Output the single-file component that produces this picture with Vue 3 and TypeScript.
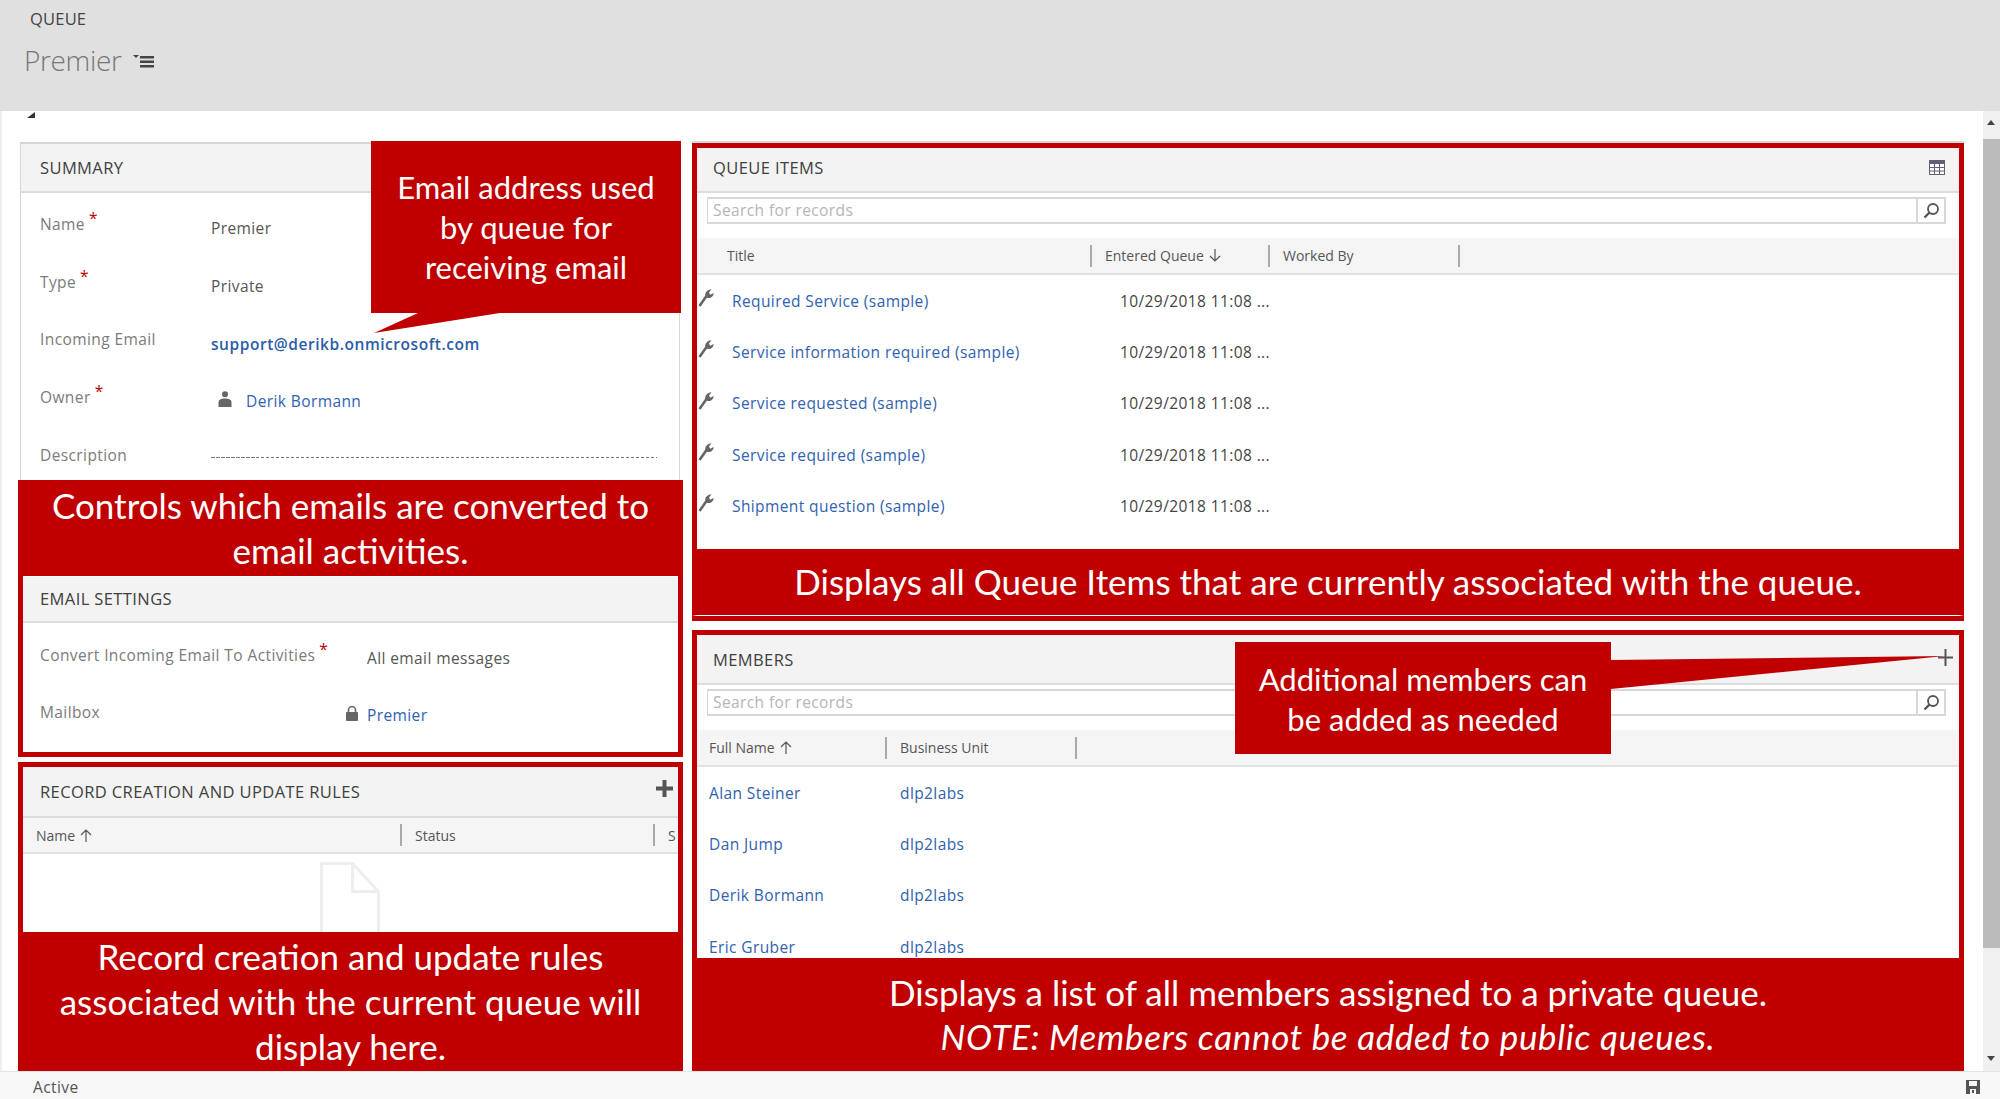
<template>
  <div class="app">
    <header class="top-bar">
      <div class="entity">QUEUE</div>
      <div class="record-name">
        <span>Premier</span>
        <svg class="menu-icon" width="21" height="13" viewBox="0 0 21 13">
          <path d="M0 0h6l-3 3z" fill="#444" />
          <path d="M7 1h14v2.500H7zM7 5.500h14V8H7zM7 10h14v2.500H7z" fill="#444" />
        </svg>
      </div>
    </header>

    <div class="middle">
      <main class="content">
        <svg class="collapse" width="9" height="6" viewBox="0 0 9 6"><path d="M9 0v6H1z" fill="#333" /></svg>
        <div class="left-col">
          <section class="summary">
            <div class="sec-head">SUMMARY</div>
            <div class="form">
              <div class="form-row">
                <span class="label">Name<i class="req">*</i></span><span class="value">Premier</span>
              </div>
              <div class="form-row">
                <span class="label">Type<i class="req">*</i></span><span class="value">Private</span>
              </div>
              <div class="form-row">
                <span class="label">Incoming Email</span><a class="value email">support@derikb.onmicrosoft.com</a>
              </div>
              <div class="form-row">
                <span class="label">Owner<i class="req">*</i></span>
                <span class="value owner">
                  <svg width="14" height="16" viewBox="0 0 14 16">
                    <circle cx="7" cy="3.2" r="3" fill="#666" />
                    <path d="M0.500 16v-4.500C0.500 8.500 3 7.500 7 7.500s6.500 1 6.500 4V16z" fill="#666" />
                  </svg>
                  <a class="link">Derik Bormann</a>
                </span>
              </div>
              <div class="form-row">
                <span class="label">Description</span><span class="dashes"></span>
              </div>
            </div>
            <div class="callout callout-email">
              Email address used<br />by queue for<br />receiving email
              <svg class="tail" width="130" height="21" viewBox="0 0 130 21"><path d="M47 0L3 20L129 0z" fill="#c00000" /></svg>
            </div>
          </section>

          <section class="frame email-frame">
            <div class="caption caption-top">Controls which emails are converted to<br />email activities.</div>
            <div class="sec-head sec-head-sm">EMAIL SETTINGS</div>
            <div class="email-form">
              <div class="email-row">
                <span class="label">Convert Incoming Email To Activities<i class="req">*</i></span>
                <span class="value">All email messages</span>
              </div>
              <div class="email-row">
                <span class="label">Mailbox</span>
                <span class="value mailbox">
                  <svg width="12" height="15" viewBox="0 0 12 15">
                    <path d="M2.500 6V4a3.500 3.500 0 0 1 7 0v2" fill="none" stroke="#666" stroke-width="1.6" />
                    <rect y="6" width="12" height="9" rx="1" fill="#666" />
                  </svg>
                  <a class="link">Premier</a>
                </span>
              </div>
            </div>
          </section>

          <section class="frame rules-frame">
            <div class="sec-head rules-head">
              RECORD CREATION AND UPDATE RULES
              <svg class="plus" width="17" height="17" viewBox="0 0 17 17"><path d="M6.500 0h4v6.500H17v4h-6.500V17h-4v-6.500H0v-4h6.500z" fill="#555" /></svg>
            </div>
            <div class="grid-head rules-cols">
              <span class="col-title first">Name
                <svg class="sort" width="12" height="13" viewBox="0 0 12 13"><path d="M6 13V1M1 6l5-5 5 5" fill="none" stroke="#555" stroke-width="1.2" /></svg>
              </span>
              <span class="col-title sep">Status</span>
              <span class="col-title sep">S</span>
            </div>
            <div class="rules-body">
              <svg width="60" height="80" viewBox="0 0 60 80">
                <path d="M1.500 78V1.500h31l26 28V78M32.500 1.500v28h26" fill="none" stroke="#eee" stroke-width="3" />
              </svg>
            </div>
            <div class="caption caption-rules">Record creation and update rules<br />associated with the current queue will<br />display here.</div>
          </section>
        </div>

        <div class="right-col">
          <section class="frame queue-frame">
            <div class="sec-head wide-head queue-head">
              QUEUE ITEMS
              <svg class="grid-icon" width="16" height="15" viewBox="0 0 16 15">
                <rect x="0.500" y="0.500" width="15" height="14" fill="#fff" stroke="#5f6078" />
                <rect x="0" y="0" width="16" height="4" fill="#5f6078" />
                <path d="M0 7.500h16M0 11h16M5.500 4v11M10.500 4v11" stroke="#5f6078" />
              </svg>
            </div>
            <div class="search">
              <span class="placeholder">Search for records</span>
              <span class="search-btn">
                <svg width="17" height="17" viewBox="0 0 17 17"><circle cx="10" cy="7" r="5" fill="none" stroke="#555" stroke-width="1.8" /><path d="M6.500 10.500L1.500 15.500" stroke="#555" stroke-width="2.4" /></svg>
              </span>
            </div>
            <div class="grid-head queue-cols">
              <span class="col-title title-col">Title</span>
              <span class="col-title sep">Entered Queue
                <svg class="sort" width="12" height="13" viewBox="0 0 12 13"><path d="M6 0v12M1 7l5 5 5-5" fill="none" stroke="#555" stroke-width="1.2" /></svg>
              </span>
              <span class="col-title sep">Worked By</span>
              <span class="col-title sep"></span>
            </div>
            <div class="rows">
              <div v-for="item in queueItems" :key="item" class="queue-row">
                <svg class="wrench" width="16" height="18" viewBox="0 0 16 18">
                  <path d="M1.500 17L8.500 7" stroke="#666" stroke-width="2.6" fill="none" />
                  <path d="M7.400 7.600C6.400 4 9 .6 13.500.3L11 3.500l1.200 2.200 3.400-1.800c.2 3.200-3 5.900-6.400 4.900z" fill="#666" />
                </svg>
                <a class="link">{{ item }}</a>
                <span class="date">10/29/2018 11:08 ...</span>
              </div>
            </div>
            <div class="caption caption-queue">Displays all Queue Items that are currently associated with the queue.</div>
          </section>

          <section class="frame members-frame">
            <div class="sec-head wide-head">
              MEMBERS
              <svg class="plus-thin" width="15" height="17" viewBox="0 0 15 17"><path d="M6.500 0h2v7.500H15v2H8.500V17h-2V9.500H0v-2h6.500z" fill="#555" /></svg>
            </div>
            <div class="search">
              <span class="placeholder">Search for records</span>
              <span class="search-btn">
                <svg width="17" height="17" viewBox="0 0 17 17"><circle cx="10" cy="7" r="5" fill="none" stroke="#555" stroke-width="1.8" /><path d="M6.500 10.500L1.500 15.500" stroke="#555" stroke-width="2.4" /></svg>
              </span>
            </div>
            <div class="grid-head members-cols">
              <span class="col-title">Full Name
                <svg class="sort" width="12" height="13" viewBox="0 0 12 13"><path d="M6 13V1M1 6l5-5 5 5" fill="none" stroke="#555" stroke-width="1.2" /></svg>
              </span>
              <span class="col-title sep">Business Unit</span>
              <span class="col-title sep"></span>
            </div>
            <div class="rows">
              <div v-for="member in members" :key="member" class="member-row">
                <a class="link">{{ member }}</a>
                <a class="link">dlp2labs</a>
              </div>
            </div>
            <div class="caption caption-members">
              Displays a list of all members assigned to a private queue.<br />
              <em>NOTE: Members cannot be added to public queues.</em>
            </div>
            <div class="callout callout-members">
              Additional members can<br />be added as needed
              <svg class="tail-side" width="334" height="48" viewBox="0 0 334 48"><path d="M0 18L334 14L0 47z" fill="#c00000" /></svg>
            </div>
          </section>
        </div>
      </main>

      <aside class="scrollbar">
        <span class="arrow up"></span>
        <span class="thumb"></span>
        <span class="arrow down"></span>
      </aside>
    </div>

    <footer class="status-bar">
      <span>Active</span>
      <svg width="14" height="14" viewBox="0 0 14 14">
        <path d="M0 0h14v14H0z" fill="#555" />
        <path d="M3 1h8v5H3zM4 9h6v5H4z" fill="#f8f8f8" />
        <path d="M6 10h2v3H6z" fill="#555" />
      </svg>
    </footer>
  </div>
</template>

<script setup lang="ts">
const queueItems: string[] = [
  "Required Service (sample)",
  "Service information required (sample)",
  "Service requested (sample)",
  "Service required (sample)",
  "Shipment question (sample)",
];

const members: string[] = ["Alan Steiner", "Dan Jump", "Derik Bormann", "Eric Gruber"];
</script>

<style scoped>
.app {
  height: 1099px;
  display: flex;
  flex-direction: column;
  overflow: hidden;
  background: #fff;
  font-family: "Open Sans", "Liberation Sans", sans-serif;
  font-size: 15.5px;
  letter-spacing: 0.4px;
  color: #444;
}

.top-bar {
  height: 111px;
  flex: none;
  box-sizing: border-box;
  padding: 9px 0 0 24px;
  background: #e0e0e0;
}

.entity {
  margin-left: 6px;
  font-size: 16.5px;
  letter-spacing: 0.2px;
  line-height: 20px;
  color: #444;
}

.record-name {
  display: flex;
  align-items: center;
  gap: 11px;
  margin-top: 12px;
  font-size: 28px;
  letter-spacing: -0.35px;
  line-height: 38px;
  font-weight: 300;
  color: #777;
}

.menu-icon {
  margin-top: 3px;
}

.middle {
  flex: 1;
  display: flex;
  min-height: 0;
}

.content {
  position: relative;
  flex: 1;
  display: flex;
  gap: 9px;
  box-sizing: border-box;
  padding: 30px 19px 0 16px;
  border-left: 2px solid #eee;
  overflow: hidden;
}

.collapse {
  position: absolute;
  left: 24px;
  top: 1px;
}

.left-col {
  width: 665px;
  flex: none;
  padding-top: 1px;
}

.right-col {
  flex: 1;
  min-width: 0;
  border-top: 2px solid #d8d8d8;
}

.summary {
  position: relative;
  box-sizing: border-box;
  height: 338px;
  margin: 0 3px 0 2px;
  border: 1px solid #d6d6d6;
  border-top-width: 2px;
  border-bottom: 0;
}

.sec-head {
  display: flex;
  align-items: center;
  justify-content: space-between;
  box-sizing: border-box;
  height: 49px;
  padding: 0 17px 0 19px;
  flex: none;
  background: #f3f3f3;
  border-bottom: 2px solid #ddd;
  font-size: 16.5px;
  letter-spacing: 0.4px;
  font-weight: 500;
  color: #404040;
}

.form {
  padding-top: 5px;
}

.form-row {
  display: flex;
  align-items: center;
  height: 57.8px;
  padding-left: 19px;
}

.label {
  width: 171px;
  flex: none;
  padding-bottom: 6px;
  color: #7b7b7b;
}

.req {
  position: relative;
  top: -6px;
  margin-left: 4px;
  font-style: normal;
  color: #c00000;
}

.value {
  color: #555;
  padding-top: 3px;
}

.email {
  font-weight: 600;
  letter-spacing: 0.55px;
  color: #2a5caa;
}

.owner,
.mailbox {
  display: flex;
  align-items: center;
}

.owner {
  padding-top: 1px;
}

.owner svg {
  margin: -3px 14px 0 7px;
}

.link {
  color: #2f62b0;
}

.dashes {
  width: 446px;
  height: 1px;
  margin-bottom: 2px;
  background: repeating-linear-gradient(90deg, #777 0 3.5px, transparent 3.5px 5px);
}

.callout {
  position: absolute;
  box-sizing: border-box;
  background: #c00000;
  color: #fff;
  text-align: center;
  font-family: Lato, "Liberation Sans", sans-serif;
  letter-spacing: 0;
  font-size: 31px;
  line-height: 40px;
}

.callout-email {
  top: -3px;
  right: -2px;
  width: 310px;
  height: 172px;
  padding-top: 26px;
}

.tail {
  position: absolute;
  left: 0;
  top: 100%;
}

.callout-members {
  left: 538px;
  top: 7px;
  width: 376px;
  height: 112px;
  padding-top: 17px;
}

.tail-side {
  position: absolute;
  left: 100%;
  top: 0;
}

.frame {
  position: relative;
  display: flex;
  flex-direction: column;
  box-sizing: border-box;
  border: 5px solid #c00000;
  overflow: visible;
}

.email-frame {
  height: 277px;
  margin-top: 0;
}

.caption {
  flex: none;
  box-sizing: border-box;
  background: #c00000;
  color: #fff;
  text-align: center;
  font-family: Lato, "Liberation Sans", sans-serif;
  letter-spacing: 0;
  font-size: 35px;
  line-height: 45px;
}

.caption-top {
  height: 93px;
  margin: -2px -5px 1px;
}

.sec-head-sm {
  height: 46px;
  padding: 0 17px 2px;
}

.email-form {
  padding-top: 6px;
}

.email-row {
  display: flex;
  align-items: center;
  height: 57px;
  padding-left: 17px;
}

.email-row .label {
  width: 320px;
  padding-bottom: 6px;
}

.email-row .value {
  padding-top: 1px;
}

.email-row:first-child .value {
  margin-left: 7px;
}

.mailbox {
  margin-left: -14px;
}

.mailbox svg {
  margin: -3px 9px 0 0;
}

.rules-frame {
  height: 315px;
  margin-top: 5px;
}

.rules-head {
  height: 51px;
  padding: 0 5px 0 17px;
}

.plus {
  margin-top: -6px;
}

.grid-head {
  display: grid;
  align-items: center;
  flex: none;
  box-sizing: border-box;
  background: #f5f5f5;
  border-bottom: 2px solid #e2e2e2;
}

.rules-cols {
  height: 36px;
  grid-template-columns: 376px 253px 1fr;
  padding-left: 1px;
  overflow: hidden;
}

.col-title {
  display: flex;
  align-items: center;
  gap: 5px;
  height: 22px;
  font-size: 14px;
  letter-spacing: 0;
  color: #555;
  box-sizing: border-box;
}

.first {
  padding-left: 12px;
}

.sep {
  border-left: 2px solid #aaa;
  padding-left: 13px;
}

.rules-body {
  flex: 1;
  min-height: 0;
  padding: 8px 0 0 297px;
  overflow: hidden;
}

.rules-body svg {
  display: block;
}

.caption-rules {
  height: 140px;
  margin: 0 -5px;
  padding-top: 2px;
}

.queue-frame {
  height: 478px;
}

.wide-head {
  height: 45px;
  padding: 0 14px 0 16px;
}

.queue-head {
  padding-bottom: 4px;
}

.search {
  display: flex;
  flex: none;
  justify-content: space-between;
  box-sizing: border-box;
  height: 27px;
  margin: 4px 13px 14px 10px;
  border: 2px solid #d8d8d8;
  border-width: 2px 2px 2px 1px;
}

.placeholder {
  padding-left: 5px;
  line-height: 23px;
  color: #b5b5b5;
}

.search-btn {
  display: flex;
  align-items: center;
  justify-content: center;
  width: 26px;
  border-left: 2px solid #d8d8d8;
}

.queue-cols {
  height: 37px;
  grid-template-columns: 393px 178px 190px 1fr;
}

.title-col {
  padding-left: 30px;
}

.rows {
  flex: 1;
  min-height: 0;
  overflow: hidden;
}

.queue-row {
  position: relative;
  display: grid;
  grid-template-columns: 388px 1fr;
  align-items: center;
  height: 51.3px;
  padding-left: 35px;
}

.wrench {
  position: absolute;
  left: 1px;
  top: 14px;
}

.date {
  color: #444;
}

.caption-queue {
  height: 67px;
  margin: 0 -5px;
  padding-top: 10px;
  border-bottom: 1px solid #fff;
  border-left: 5px solid #c00000;
  border-right: 5px solid #c00000;
}

.members-frame {
  height: 446px;
  margin-top: 9px;
}

.members-frame .wide-head {
  height: 50px;
  padding-right: 27px;
}

.plus-thin {
  position: absolute;
  z-index: 2;
  left: 1241px;
  top: 14px;
}

.members-cols {
  height: 37px;
  grid-template-columns: 176px 190px 1fr;
  padding-left: 12px;
}

.members-frame .search {
  margin-bottom: 14px;
}

.member-row {
  display: grid;
  grid-template-columns: 191px 1fr;
  align-items: center;
  height: 51.3px;
  padding-left: 12px;
}

.caption-members {
  height: 113px;
  margin: 0 -5px;
  padding-top: 12px;
  line-height: 44px;
}

.caption-members em {
  font-style: italic;
  letter-spacing: 0.68px;
}

.scrollbar {
  position: relative;
  width: 17px;
  flex: none;
  background: #f0f0f0;
}

.thumb {
  position: absolute;
  left: 0;
  right: 0;
  top: 28px;
  height: 809px;
  background: #bbb;
}

.arrow {
  position: absolute;
  left: 4px;
  width: 0;
  height: 0;
  border-left: 4.5px solid transparent;
  border-right: 4.5px solid transparent;
}

.up {
  top: 9px;
  border-bottom: 5px solid #444;
}

.down {
  top: 945px;
  border-top: 5px solid #444;
}

.status-bar {
  position: relative;
  display: flex;
  align-items: center;
  justify-content: space-between;
  height: 28px;
  flex: none;
  box-sizing: border-box;
  padding: 3px 20px 0 33px;
  background: #f8f8f8;
  border-top: 1px solid #e4e4e4;
  color: #555;
}
</style>

<style>
html,
body {
  margin: 0;
  overflow: hidden;
}
</style>
